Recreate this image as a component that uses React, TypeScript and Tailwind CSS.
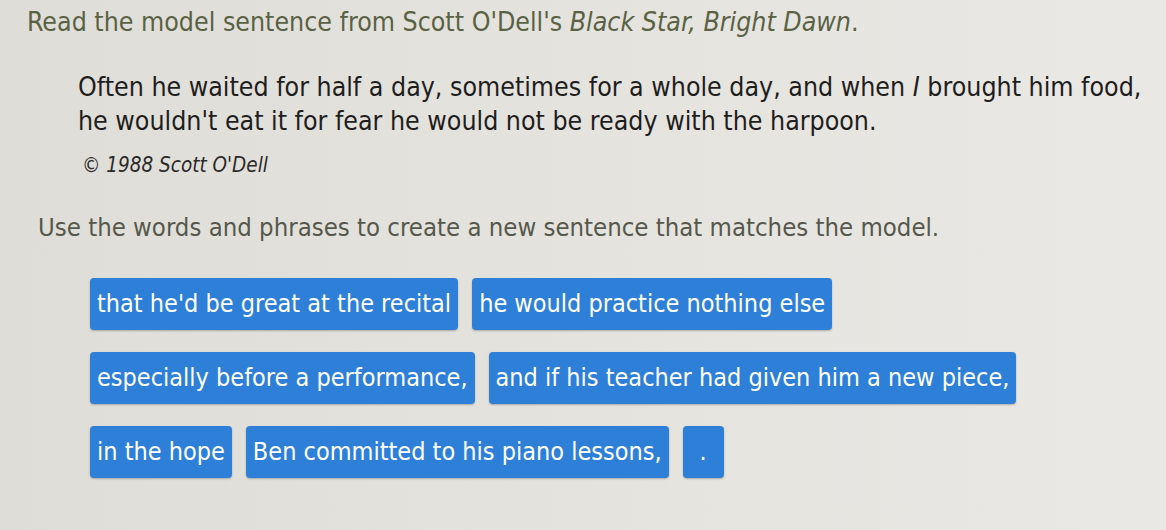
const tiles: string[][] = [
  ["that he'd be great at the recital", "he would practice nothing else"],
  ["especially before a performance,", "and if his teacher had given him a new piece,"],
  ["in the hope", "Ben committed to his piano lessons,", "."],
];

export default function App() {
  return (
    <div
      className="w-[1166px] h-[530px] overflow-hidden bg-[linear-gradient(90deg,#dfddd7,#e6e4df_60%,#e9e8e4)] text-[#222]"
      style={{ fontFamily: '"DejaVu Sans Condensed", "DejaVu Sans", Verdana, sans-serif' }}
    >
      <div className="pt-[7px] pl-[27px]">
        <p className="text-[26.5px] leading-[30px] text-[#596244]">
          Read the model sentence from Scott O'Dell's <i>Black Star, Bright Dawn</i>.
        </p>

        <blockquote className="mt-[33px] ml-[51px] text-[26.5px] leading-[34px] text-[#1e1e1e]">
          Often he waited for half a day, sometimes for a whole day, and when <i>I</i> brought him food,
          <br />
          he wouldn't eat it for fear he would not be ready with the harpoon.
        </blockquote>

        <p className="mt-[14px] ml-[55px] text-[20.5px] leading-[26px] italic text-[#2a2a2a]">
          © 1988 Scott O'Dell
        </p>

        <p className="mt-[33px] ml-[11px] text-[25.5px] leading-[32px] text-[#55584c]">
          Use the words and phrases to create a new sentence that matches the model.
        </p>

        <div className="mt-[35px] ml-[63px] flex flex-col gap-[22px]">
          {tiles.map((row, i) => (
            <div key={i} className="flex gap-[14px]">
              {row.map((t) => (
                <div
                  key={t}
                  className="h-[52px] px-[7px] flex items-center rounded-[4px] bg-[#2e7fd8] text-white text-[25px] shadow-[0_1px_2px_rgba(0,0,0,0.25)]"
                >
                  <span className={t === "." ? "px-[10px]" : ""}>{t}</span>
                </div>
              ))}
            </div>
          ))}
        </div>
      </div>
    </div>
  );
}
